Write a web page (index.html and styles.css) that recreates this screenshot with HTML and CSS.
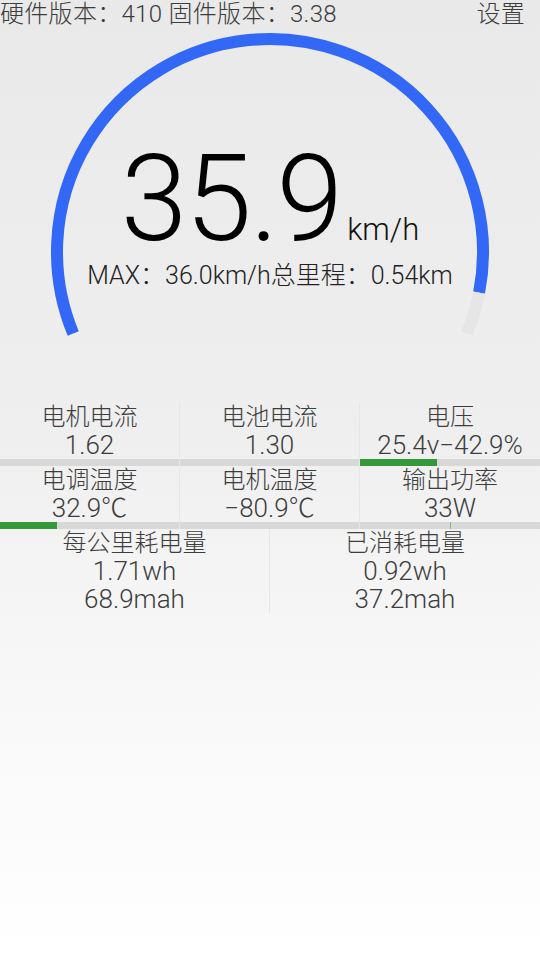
FILE: index.html
```html
<!DOCTYPE html>
<html lang="zh-CN">
<head>
<meta charset="utf-8">
<title>仪表</title>
<link rel="stylesheet" href="styles.css">
</head>
<body>
<div class="screen">
  <header class="topbar">
    <span class="versions">硬件版本：410 固件版本：3.38</span>
    <span class="settings">设置</span>
  </header>

  <section class="gauge">
    <svg class="gauge-arc" width="540" height="373" viewBox="0 0 540 373">
      <path d="M 73.21 303.51 A 213 213 0 1 1 479.09 262.64" fill="none" stroke="#3368f7" stroke-width="12"/>
      <path d="M 479.09 262.64 A 213 213 0 0 1 466.79 303.51" fill="none" stroke="#e6e6e6" stroke-width="12"/>
    </svg>
    <div class="speed-row">
      <span class="speed">35.9</span><span class="unit">km/h</span>
    </div>
    <div class="trip">MAX：36.0km/h总里程：0.54km</div>
  </section>

  <section class="stats3">
    <div class="cell">
      <div class="label">电机电流</div>
      <div class="value">1.62</div>
      <div class="bar"></div>
    </div>
    <div class="cell">
      <div class="label">电池电流</div>
      <div class="value">1.30</div>
      <div class="bar"></div>
    </div>
    <div class="cell">
      <div class="label">电压</div>
      <div class="value">25.4v−42.9%</div>
      <div class="bar"><div class="fill" style="width:42.9%"></div></div>
    </div>
  </section>

  <section class="stats3">
    <div class="cell">
      <div class="label">电调温度</div>
      <div class="value">32.9℃</div>
      <div class="bar"><div class="fill" style="width:32%"></div></div>
    </div>
    <div class="cell">
      <div class="label">电机温度</div>
      <div class="value">−80.9℃</div>
      <div class="bar"></div>
    </div>
    <div class="cell">
      <div class="label">输出功率</div>
      <div class="value">33W</div>
      <div class="bar"><div class="tick"></div></div>
    </div>
  </section>

  <section class="stats2">
    <div class="cell">
      <div class="label">每公里耗电量</div>
      <div class="value">1.71wh</div>
      <div class="value">68.9mah</div>
    </div>
    <div class="cell">
      <div class="label">已消耗电量</div>
      <div class="value">0.92wh</div>
      <div class="value">37.2mah</div>
    </div>
  </section>
</div>
</body>
</html>
```

FILE: styles.css
```css
html, body {
  margin: 0;
  padding: 0;
}

body {
  width: 540px;
  min-height: 960px;
  background: linear-gradient(to bottom, #e9e9e9 0%, #efefef 45%, #f6f6f6 65%, #ffffff 100%);
  font-family: "Roboto", "Noto Sans CJK SC", sans-serif;
  font-weight: 300;
  color: #3a3a3a;
}

.screen {
  display: flex;
  flex-direction: column;
}

.topbar {
  height: 30px;
  display: flex;
  justify-content: space-between;
  align-items: flex-start;
  padding: 0 15px 0 0;
  font-size: 24px;
  line-height: 28px;
  color: #3c3c3c;
  letter-spacing: 0.3px;
}

.gauge {
  position: relative;
  height: 373px;
  box-sizing: border-box;
  padding-top: 119px;
  display: flex;
  flex-direction: column;
  align-items: center;
}

.gauge-arc {
  position: absolute;
  left: 0;
  top: 0;
}

.speed-row {
  position: relative;
  display: flex;
  align-items: baseline;
  justify-content: center;
  height: 110px;
  line-height: 100px;
  color: #000;
}

.speed {
  font-size: 120px;
  font-weight: 300;
  letter-spacing: -2px;
}

.unit {
  font-size: 31px;
  line-height: 31px;
  margin-left: 6px;
  color: #111;
}

.trip {
  position: relative;
  margin-top: 3px;
  font-size: 25px;
  line-height: 28px;
  color: #222;
}

.stats3 {
  display: grid;
  grid-template-columns: 180px 180px 180px;
}

.stats2 {
  display: grid;
  grid-template-columns: 270px 270px;
}

.cell {
  display: flex;
  flex-direction: column;
  align-items: stretch;
  border-right: 1px solid #e6e6e6;
}

.cell:last-child {
  border-right: none;
}

.label,
.value {
  text-align: center;
  font-size: 24px;
  line-height: 28px;
  height: 28px;
  white-space: nowrap;
  color: #3d3d3d;
}

.value {
  font-size: 26px;
}

.bar {
  height: 7px;
  background: #d8d8d8;
  display: flex;
}

.fill {
  height: 100%;
  background: #33993a;
}

.tick {
  margin-left: 50%;
  width: 1px;
  height: 100%;
  background: #7fbf80;
}

.stats2 .cell {
  height: 84px;
}
```
